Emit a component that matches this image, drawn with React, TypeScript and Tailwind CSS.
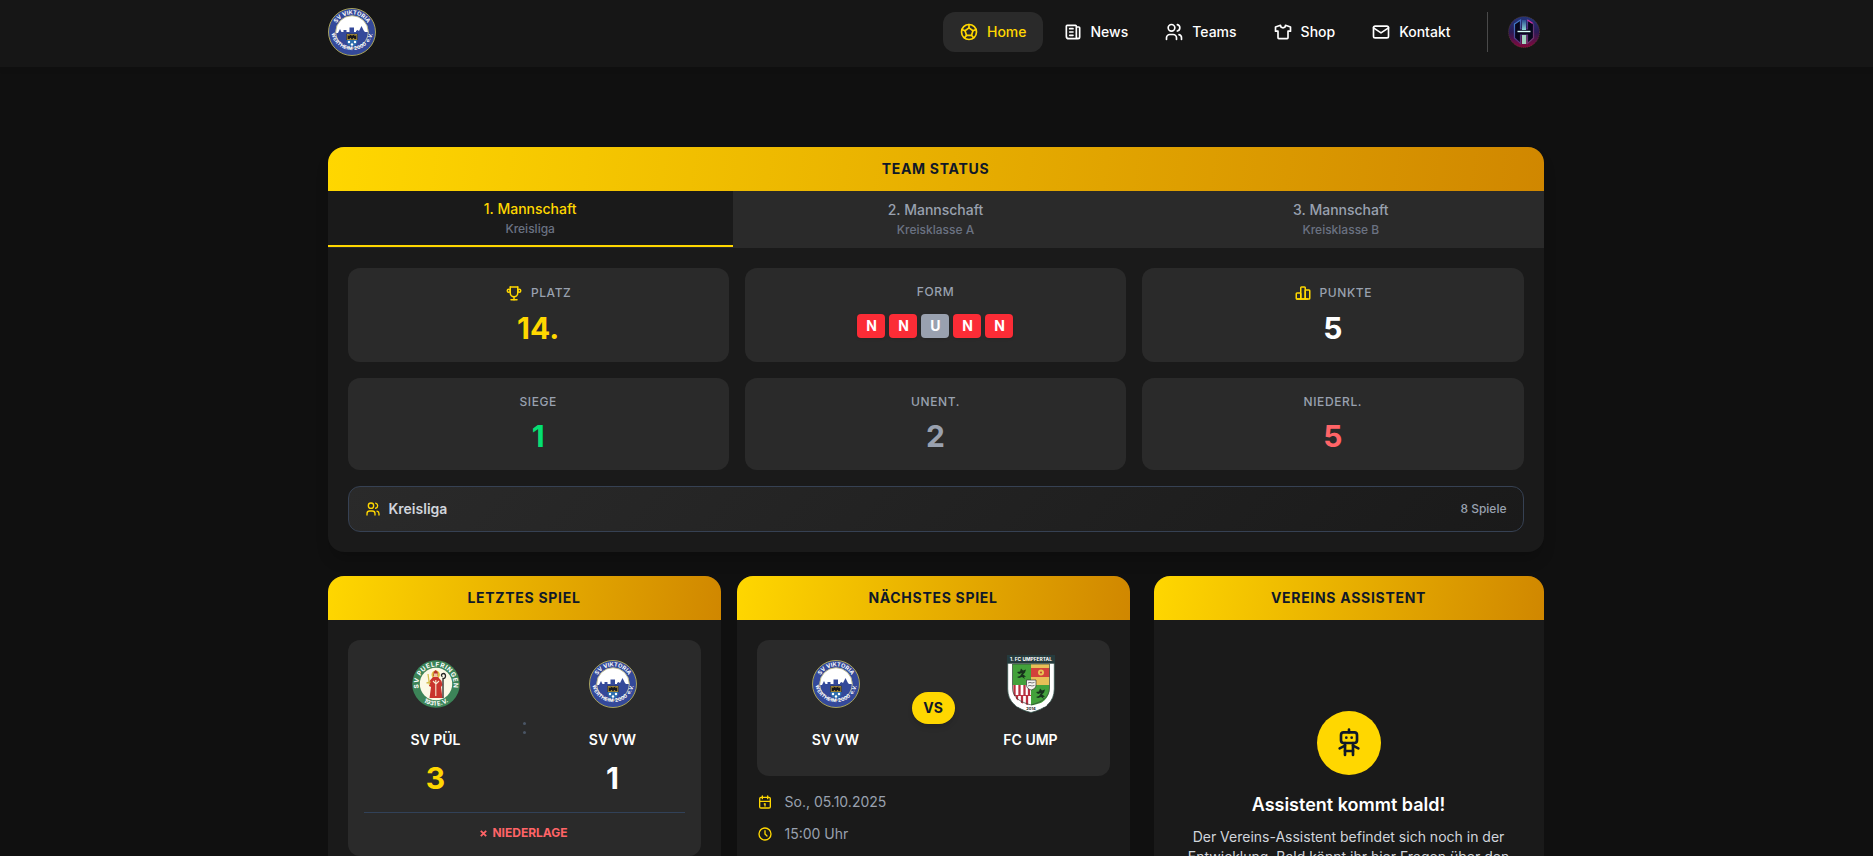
import { TbBallFootball, TbNews, TbUsers, TbShirt, TbMail, TbTrophy, TbChartBar, TbCalendar, TbClock, TbRobot } from "react-icons/tb";
import type { ReactNode } from "react";

const nav = [
  { label: "Home", Icon: TbBallFootball, cls: "bg-[#2a2a2a] text-[#ffd700]" },
  { label: "News", Icon: TbNews, cls: "text-white" },
  { label: "Teams", Icon: TbUsers, cls: "text-white" },
  { label: "Shop", Icon: TbShirt, cls: "text-white" },
  { label: "Kontakt", Icon: TbMail, cls: "text-white" },
];

function ViktoriaCrest() {
  return (
    <svg viewBox="0 0 48 48" className="size-12 shrink-0">
      <defs>
        <path id="vTop" d="M6.3 24a17.7 17.7 0 0 1 35.4 0" />
        <path id="vBottom" d="M2.900 23a21.200 21.200 0 0 0 42.200 0" />
        <clipPath id="vClip"><circle cx="24" cy="24" r="15.800" /></clipPath>
      </defs>
      <circle cx="24" cy="24" r="23.500" fill="#34499a" stroke="#a9a45c" />
      <circle cx="24" cy="24" r="16.300" fill="#fff" stroke="#b7b487" strokeWidth=".9" />
      <path clipPath="url(#vClip)" fill="#34499a" d="M7 25h3l2-4 1.500 3h2v-2h3v2h3v-4.500h4.500v4.500h2v-1l1.500-1 1.500 1 2.500-5 2.500 5 1 1h4v20H7z" />
      <path fill="#d6b138" stroke="#16203f" strokeWidth=".6" d="M18.500 26h11v6h-11z" />
      <path fill="#17171c" d="M19.500 27l2 1v-1.500l2.500 1 2.500-1V28l2-1v4h-2l-1-1-1.500 1.500-1.500-1.500-1 1h-2z" />
      <path fill="#2d6fae" d="M18.500 32h11c0 4-2.500 6-5.500 7-3-1-5.500-3-5.500-7z" />
      <g fill="#fff"><circle cx="21" cy="34" r="1.200" /><circle cx="24" cy="36.500" r="1.200" /><circle cx="27" cy="34" r="1.200" /></g>
      <g fill="#fff" fontFamily="Inter, sans-serif" fontWeight="700" textAnchor="middle">
        <text fontSize="5.700"><textPath href="#vTop" startOffset="50%">SV VIKTORIA</textPath></text>
        <text fontSize="5" letterSpacing=".15" wordSpacing=".6"><textPath href="#vBottom" startOffset="50%">WERTHEIM 2000 e.V.</textPath></text>
      </g>
    </svg>
  );
}

function PuelfringenCrest() {
  return (
    <svg viewBox="0 0 48 48" className="size-12 shrink-0">
      <defs>
        <path id="pTop" d="M9.600 34a17.500 17.500 0 1 1 28.800 0" />
        <path id="pBottom" d="M2.300 24a21.700 21.700 0 0 0 43.400 0" />
      </defs>
      <circle cx="24" cy="24" r="23.800" fill="#3c8458" />
      <circle cx="24" cy="24" r="16.200" fill="#fcf9e6" />
      <circle cx="23.700" cy="14.800" r="4.200" fill="#dfc23f" />
      <path fill="#c9342e" d="M21 17l-3.500 4-.5 5 2 1-1.500 11h13l-1.500-11 1.500-2-1-4-3.500-4z" />
      <path fill="#b5302c" d="M21.300 16l.4-4 2-2 2 2 .3 4z" />
      <path fill="#efc4a4" d="M22 13.500h3.600V17H22z" />
      <path d="M23.800 20v16M21 21l3 3 3-3" stroke="#f6e8d0" strokeWidth="1.100" fill="none" />
      <path d="M16 14l1.500 11M14.500 23l4-1" stroke="#d6bf50" strokeWidth="1.300" />
      <path d="M31 38V18.500c3 .5 3.500-5 .5-5-2 0-3 2.200-1 3.200" stroke="#242424" strokeWidth="1.300" fill="none" />
      <g fill="#fff" fontFamily="Inter, sans-serif" fontWeight="700" textAnchor="middle">
        <text fontSize="6.400" letterSpacing=".55"><textPath href="#pTop" startOffset="50%">SV PUELFRINGEN</textPath></text>
        <text fontSize="6.200"><textPath href="#pBottom" startOffset="50%">1931 E.V.</textPath></text>
      </g>
    </svg>
  );
}

function UmpfertalCrest() {
  return (
    <svg viewBox="0 0 48 58" className="h-[58px] w-12 shrink-0">
      <defs><clipPath id="uClip"><path d="M5.500 9h37v24c0 10-7 16-18.500 20C12.500 49 5.500 43 5.500 33z" /></clipPath></defs>
      <path d="M.7 8h46.600v26c0 13-9 20-23.300 23.500C9.700 54 .7 47 .7 34z" fill="#fff" stroke="#35544c" strokeWidth=".8" />
      <path d="M0 0h48v8.500H0z" fill="#253b3d" />
      <g clipPath="url(#uClip)">
        <path fill="#43a13b" d="M5 9h19v21H5zM24 30h20v25H24z" />
        <path fill="#e8bf57" d="M24 9h20v21H24z" />
        <path fill="#d2423b" d="M24 13h20v9H24z" />
        <path fill="#fff" d="M5 30h19v25H5z" />
        <path d="M7.500 30v10M12.500 30v10M17.500 30v10M22 30v10M10 40v12M15 40v12M20 40v12" stroke="#b93040" strokeWidth="2.300" />
        <path d="M5 40.500h19" stroke="#b93040" />
      </g>
      <path d="M5.500 9h37v24c0 9-7 14-18.500 17C12.500 47 5.500 42 5.500 33z" fill="none" stroke="#34433a" strokeWidth=".7" />
      <path d="M5.500 42c4 5 11 7.300 18.500 8.500 7.500-1.200 14.500-3.500 18.500-8.500l-3 9L24 56 9 51z" fill="#fff" />
      <path d="M10 22l3-1 2-3-3 1-2-2 3-.5 1-3 2 2 3-1-1 3-2 2 3 2-2 .5 1 2-3-2-3 1z" fill="#17311c" />
      <path d="M29 42l3-1 2-3-3 1-2-2 3-.5 1-3 2 2 3-1-1 3-2 2 3 2-2 .5 1 2-3-2-3 1z" fill="#17311c" />
      <circle cx="34" cy="17.500" r="3" fill="#e7c454" /><circle cx="34" cy="17.500" r="1.100" fill="#c64637" />
      <path d="M19.500 25h9.500v5c0 3-2 4-4.800 5-2.700-1-4.700-2-4.700-5z" fill="#f4f4f2" stroke="#333" strokeWidth=".7" />
      <path d="M21 28l2-.6 2 .6 2.500-.6M21 31l2-.6 2 .6 2.500-.6" stroke="#444" strokeWidth=".7" fill="none" />
      <text x="24" y="6" fontFamily="Inter, sans-serif" fontWeight="700" fontSize="4.900" fill="#fff" textAnchor="middle">1. FC UMPFERTAL</text>
      <text x="24" y="55" fontFamily="Inter, sans-serif" fontWeight="700" fontSize="4" fill="#222" textAnchor="middle">2014</text>
    </svg>
  );
}

function Avatar() {
  return (
    <svg viewBox="0 0 32 32" className="size-8">
      <defs>
        <linearGradient id="avBg" x1="0" y1="0" x2="0" y2="1"><stop stopColor="#23357a" /><stop offset=".5" stopColor="#2b1a55" /><stop offset="1" stopColor="#85083c" /></linearGradient>
        <linearGradient id="avLine" x1="0" y1="0" x2="1" y2="1"><stop stopColor="#3c8ddc" /><stop offset=".5" stopColor="#53307c" /><stop offset="1" stopColor="#7b3a6c" /></linearGradient>
        <linearGradient id="avTop" x1="0" y1="0" x2="0" y2="1"><stop stopColor="#2a4d90" /><stop offset="1" stopColor="#8fdcd8" /></linearGradient>
      </defs>
      <circle cx="16" cy="16" r="15.500" fill="url(#avBg)" stroke="#654531" strokeWidth=".7" strokeDasharray="1 1" />
      <path d="M12.500 4L6.500 8v14l6 5.500V19h7v8.500l6-5.500V8l-6-4v9h-7z" fill="#07071c" stroke="url(#avLine)" strokeWidth="1.200" />
      <path d="M19.500 4l5 3.300" stroke="#d02c9c" strokeWidth="1.300" />
      <path d="M14 4h4v10.500h-4z" fill="url(#avTop)" />
      <path d="M11 14h10v3.500H11z" fill="#07071c" />
      <path d="M9.500 15.500h13" stroke="#d9fff8" strokeWidth="1.400" />
      <path d="M14 19h4.200v9H14z" fill="#a4d4c0" />
    </svg>
  );
}

function Title({ children }: { children: ReactNode }) {
  return (
    <div className="flex h-11 shrink-0 items-center justify-center bg-[linear-gradient(98deg,#ffd700,#d08700)]">
      <h3 className="text-sm font-bold tracking-[0.7px] text-[#101828] uppercase">{children}</h3>
    </div>
  );
}

function Stat({ label, icon, children, color }: { label: string; icon?: ReactNode; children: ReactNode; color: string }) {
  return (
    <div className="rounded-xl bg-[#2a2a2a] p-4 text-center">
      <div className="mb-2 flex items-center justify-center gap-2">
        {icon}
        <span className="text-xs font-medium tracking-[0.6px] text-[#99a1af] uppercase">{label}</span>
      </div>
      <div className={`text-3xl font-bold ${color}`}>{children}</div>
    </div>
  );
}

function Team({ crest, name, width, score, color }: { crest: ReactNode; name: string; width: string; score?: string; color?: string }) {
  return (
    <div className={`flex flex-col items-center ${width}`}>
      <div className="flex size-14 items-center justify-center">{crest}</div>
      <div className="mt-[18px] text-sm font-semibold whitespace-nowrap text-white">{name}</div>
      {score && <div className={`mt-2.5 text-3xl font-bold ${color}`}>{score}</div>}
    </div>
  );
}

export default function App() {
  return (
    <div className="h-[856px] overflow-hidden bg-[#101010] font-['Inter',sans-serif] text-white antialiased">
      <header className="h-[67px] bg-[#161616] pr-0.5 shadow-[0_2px_6px_rgba(0,0,0,0.08)]">
        <div className="mx-auto flex h-16 w-[1216px] items-center justify-between">
          <ViktoriaCrest />
          <div className="flex items-center pr-1">
            <nav className="flex gap-1">
              {nav.map(({ label, Icon, cls }) => (
                <a key={label} className={`flex h-10 items-center gap-2 rounded-xl px-4 text-sm font-medium ${cls}`}>
                  <Icon size={20} />
                  <span>{label}</span>
                </a>
              ))}
            </nav>
            <div className="mr-5 ml-5 h-10 w-px bg-[#4a4a4a]" />
            <Avatar />
          </div>
        </div>
      </header>

      <div className="pr-0.5">
        <main className="mx-auto w-[1216px] pt-20">
          <section className="overflow-hidden rounded-2xl bg-[#1a1a1a] shadow-[0_10px_15px_-3px_rgba(0,0,0,0.2)]">
            <Title>Team Status</Title>
            <div className="grid h-[57px] grid-cols-3 bg-[#2a2a2a] text-center text-sm font-medium">
              <div className="mb-px flex flex-col items-center justify-center border-b-2 border-[#ffd700] bg-[#1a1a1a] pt-px text-[#ffd700]">
                <span className="leading-5">1. Mannschaft</span>
                <span className="text-xs leading-5 text-[#6a7282]">Kreisliga</span>
              </div>
              <div className="flex flex-col items-center justify-center text-[#99a1af]">
                <span className="leading-5">2. Mannschaft</span>
                <span className="text-xs leading-5 text-[#6a7282]">Kreisklasse A</span>
              </div>
              <div className="flex flex-col items-center justify-center text-[#99a1af]">
                <span className="leading-5">3. Mannschaft</span>
                <span className="text-xs leading-5 text-[#6a7282]">Kreisklasse B</span>
              </div>
            </div>
            <div className="p-5">
              <div className="grid grid-cols-3 grid-rows-[94px_92px] gap-4">
                <Stat label="Platz" icon={<TbTrophy size={18} className="text-[#ffd700]" />} color="text-[#ffd700]">14.</Stat>
                <Stat label="Form" color="text-white">
                  <div className="flex justify-center gap-1 pt-1.5 text-sm leading-6">
                    {["N", "N", "U", "N", "N"].map((f, i) => (
                      <span key={i} className={`h-6 w-7 rounded shadow-sm ${f === "N" ? "bg-[#fb2c36]" : "bg-[#99a1af]"}`}>{f}</span>
                    ))}
                  </div>
                </Stat>
                <Stat label="Punkte" icon={<TbChartBar size={18} className="text-[#ffd700]" />} color="text-white">5</Stat>
                <Stat label="Siege" color="text-[#05df72]">1</Stat>
                <Stat label="Unent." color="text-[#99a1af]">2</Stat>
                <Stat label="Niederl." color="text-[#ff6467]">5</Stat>
              </div>
              <div className="mt-4 flex h-[46px] items-center justify-between rounded-xl border border-[#364153] bg-[linear-gradient(135deg,#2a2a2a,#1a1a1a)] px-4">
                <div className="flex items-center gap-2 text-sm font-semibold text-[#d1d5dc]">
                  <TbUsers size={16} className="text-[#ffd700]" />
                  Kreisliga
                </div>
                <span className="text-xs font-medium text-[#99a1af]">8 Spiele</span>
              </div>
            </div>
          </section>

          <div className="mt-6 flex h-[400px]">
            <section className="w-[393px] overflow-hidden rounded-2xl bg-[#1a1a1a]">
              <Title>Letztes Spiel</Title>
              <div className="m-5 h-[216px] rounded-xl bg-[#2a2a2a] p-4">
                <div className="flex h-[156px] justify-between">
                  <Team width="w-36" crest={<PuelfringenCrest />} name="SV PÜL" score="3" color="text-[#ffd700]" />
                  <div className="flex h-36 flex-col items-center justify-center gap-1.5">
                    <span className="size-[3px] rounded-full bg-[#4a5565]" />
                    <span className="size-[3px] rounded-full bg-[#4a5565]" />
                  </div>
                  <Team width="w-36" crest={<ViktoriaCrest />} name="SV VW" score="1" color="text-white" />
                </div>
                <div className="flex items-center justify-center gap-[5px] border-t border-[#314158] pt-3 text-xs font-bold text-[#ff6467]">
                  <svg viewBox="0 0 7 7" className="mt-px size-[7px]" fill="none" stroke="currentColor" strokeWidth="1.800">
                    <path d="M.8.8l5.400 5.400M6.200.8L.8 6.200" />
                  </svg>
                  NIEDERLAGE
                </div>
              </div>
            </section>
            <section className="ml-4 w-[393px] overflow-hidden rounded-2xl bg-[#1a1a1a]">
              <Title>Nächstes Spiel</Title>
              <div className="mx-5 mt-5 mb-4 flex h-[136px] justify-between rounded-xl bg-[#2a2a2a] p-4">
                <Team width="w-[126px]" crest={<ViktoriaCrest />} name="SV VW" />
                <span className="mt-9 flex h-8 w-[43px] items-center justify-center rounded-full bg-[#ffd700] text-sm font-bold text-[#101828] shadow-md">VS</span>
                <Team width="w-[126px]" crest={<UmpfertalCrest />} name="FC UMP" />
              </div>
              <div className="flex flex-col gap-3 pl-5 text-sm text-[#99a1af]">
                <div className="flex items-center gap-3"><TbCalendar size={16} className="text-[#ffd700]" />So., 05.10.2025</div>
                <div className="flex items-center gap-3"><TbClock size={16} className="text-[#ffd700]" />15:00 Uhr</div>
              </div>
            </section>
            <section className="ml-6 flex-1 overflow-hidden rounded-2xl bg-[#1a1a1a]">
              <Title>Vereins Assistent</Title>
              <div className="flex flex-col items-center px-8 pt-[91px] text-center">
                <div className="flex size-16 items-center justify-center rounded-full bg-[#ffd700] text-[#101828]"><TbRobot size={32} /></div>
                <h4 className="mt-4 text-lg font-semibold">Assistent kommt bald!</h4>
                <p className="mt-2 text-sm leading-5 whitespace-nowrap text-[#d1d5dc]">Der Vereins-Assistent befindet sich noch in der<br />Entwicklung. Bald könnt ihr hier Fragen über den</p>
              </div>
            </section>
          </div>
        </main>
      </div>
    </div>
  );
}
